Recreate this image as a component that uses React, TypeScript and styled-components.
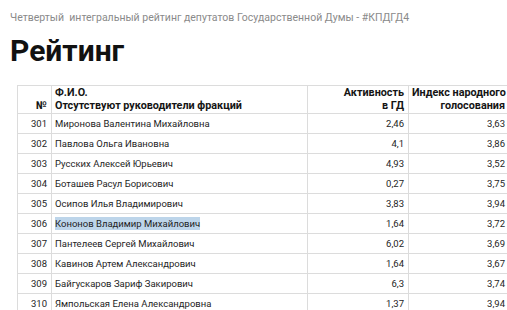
import React from 'react';
import styled, { createGlobalStyle } from 'styled-components';

const GlobalStyle = createGlobalStyle`
  html, body {
    margin: 0;
    padding: 0;
    background: #fff;
    overflow: hidden;
  }
  body {
    font-family: Roboto, "Liberation Sans", Arial, sans-serif;
    color: #222;
  }
`;

const Page = styled.div`
  width: 507px;
  height: 310px;
  overflow: hidden;
  padding: 11px 0 0 10px;
  box-sizing: border-box;
`;

const Subtitle = styled.div`
  font-size: 10.5px;
  line-height: 13px;
  color: #8a8a8a;
  white-space: pre;
`;

const Title = styled.h1`
  margin: 9px 0 0 0;
  font-size: 30px;
  line-height: 36px;
  font-weight: 700;
  color: #111;
`;

const Table = styled.table`
  margin: 16px 0 0 7px;
  border-collapse: collapse;
  font-size: 9.5px;
  color: #1e1e1e;
  table-layout: fixed;
  width: 492px;
  min-width: 492px;
`;

const HeadRow = styled.tr`
  height: 28px;
`;

const BodyRow = styled.tr`
  height: 20px;
`;

const Head = styled.th<{ $align?: 'left' | 'right' }>`
  text-align: ${p => p.$align || 'right'};
  vertical-align: bottom;
  font-size: 10.8px;
  font-weight: 700;
  line-height: 12.5px;
  padding: 0 4px 1px 3px;
  border: 1px solid #dcdcdc;
  white-space: nowrap;
  color: #151515;
`;

const Cell = styled.td<{ $align?: 'left' | 'right' }>`
  text-align: ${p => p.$align || 'right'};
  padding: 0 4px 0 3px;
  line-height: 12px;
  border: 1px solid #dcdcdc;
  white-space: nowrap;
`;

const Marked = styled.span`
  background: #bdd5ea;
  padding: 1px 0;
`;

const rows: [number, string, string, string][] = [
  [301, 'Миронова Валентина Михайловна', '2,46', '3,63'],
  [302, 'Павлова Ольга Ивановна', '4,1', '3,86'],
  [303, 'Русских Алексей Юрьевич', '4,93', '3,52'],
  [304, 'Боташев Расул Борисович', '0,27', '3,75'],
  [305, 'Осипов Илья Владимирович', '3,83', '3,94'],
  [306, 'Кононов Владимир Михайлович', '1,64', '3,72'],
  [307, 'Пантелеев Сергей Михайлович', '6,02', '3,69'],
  [308, 'Кавинов Артем Александрович', '1,64', '3,67'],
  [309, 'Байгускаров Зариф Закирович', '6,3', '3,74'],
  [310, 'Ямпольская Елена Александровна', '1,37', '3,94'],
];

export default function App() {
  return (
    <Page>
      <GlobalStyle />
      <Subtitle>Четвертый  интегральный рейтинг депутатов Государственной Думы - #КПДГД4</Subtitle>
      <Title>Рейтинг</Title>
      <Table>
        <colgroup>
          <col style={{ width: 34 }} />
          <col style={{ width: 256 }} />
          <col style={{ width: 101 }} />
          <col style={{ width: 101 }} />
        </colgroup>
        <thead>
          <HeadRow>
            <Head>№</Head>
            <Head $align="left">Ф.И.О.<br />Отсутствуют руководители фракций</Head>
            <Head>Активность<br />в ГД</Head>
            <Head>Индекс народного<br />голосования</Head>
          </HeadRow>
        </thead>
        <tbody>
          {rows.map(([n, name, a, b]) => (
            <BodyRow key={n}>
              <Cell>{n}</Cell>
              <Cell $align="left">{n === 306 ? <Marked>{name}</Marked> : name}</Cell>
              <Cell>{a}</Cell>
              <Cell>{b}</Cell>
            </BodyRow>
          ))}
        </tbody>
      </Table>
    </Page>
  );
}
